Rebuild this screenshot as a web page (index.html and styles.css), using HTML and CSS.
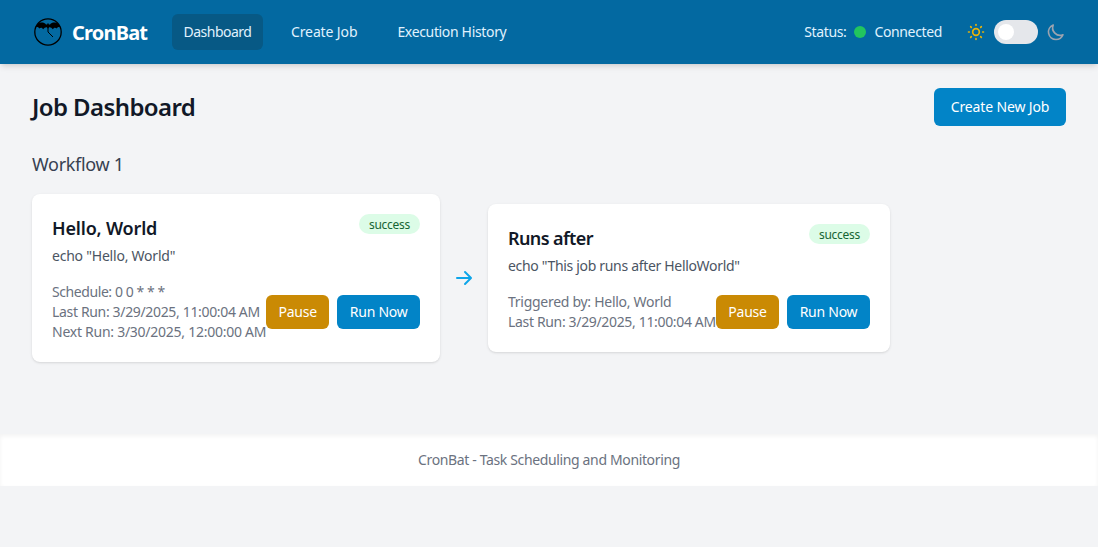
FILE: index.html
```html
<!DOCTYPE html>
<html lang="en">
<head>
<meta charset="utf-8">
<title>CronBat</title>
<link rel="stylesheet" href="styles.css">
</head>
<body>
<header class="topbar">
  <div class="brand">
    <svg class="logo" viewBox="0 0 32 32"><circle cx="16" cy="16" r="13.2" fill="none" stroke="#000" stroke-width="1.3"/><path d="M3.500 11.500L5.500 8C8 6 12 5.800 14 8.500L15.200 8.500 15.300 7.200 16 7.800 16.700 7.200 16.800 8.500 18 8.500C20 5.800 24 6 26.500 8L28.500 11.500C27 10.800 25.800 11 24.800 12.500 23.500 11.200 21.800 11.300 20.800 13.300 19.800 11.800 18.300 11 17.200 11.300L16 12.800 14.800 11.300C13.700 11 12.200 11.800 11.200 13.300 10.200 11.300 8.500 11.200 7.200 12.500 6.200 11 5 10.800 3.500 11.500z" fill="#000"/><path d="M16 10.500V16l5 5" fill="none" stroke="#000" stroke-width="1"/></svg>
    <span class="brand-name">CronBat</span>
  </div>
  <nav class="nav"><a class="nav-link active">Dashboard</a><a class="nav-link nav-create">Create Job</a><a class="nav-link">Execution History</a></nav>
  <div class="status"><span>Status:</span><i class="dot"></i><span>Connected</span></div>
  <div class="theme">
    <svg class="icon sun" viewBox="0 0 24 24"><path d="M12 3v1m0 16v1m9-9h-1M4 12H3m15.364 6.364l-.707-.707M6.343 6.343l-.707-.707m12.728 0l-.707.707M6.343 17.657l-.707.707M16 12a4 4 0 11-8 0 4 4 0 018 0z"/></svg>
    <span class="toggle"><i class="knob"></i></span>
    <svg class="icon moon" viewBox="0 0 24 24"><path d="M20.354 15.354A9 9 0 018.646 3.646 9.003 9.003 0 0012 21a9.003 9.003 0 008.354-5.646z"/></svg>
  </div>
</header>
<main class="main">
  <div class="heading"><h1 class="title">Job Dashboard</h1><button class="btn create">Create New Job</button></div>
  <h2 class="workflow">Workflow 1</h2>
  <div class="flow">
    <section class="card card-first">
      <div class="card-head"><h3 class="card-title">Hello, World</h3><span class="badge">success</span></div>
      <p class="command">echo "Hello, World"</p>
      <div class="card-foot"><div class="meta"><p class="schedule">Schedule: 0 0 * * *</p><p class="last-run">Last Run: 3/29/2025, 11:00:04 AM</p><p>Next Run: 3/30/2025, 12:00:00 AM</p></div><div class="actions"><button class="btn pause">Pause</button><button class="btn run">Run Now</button></div></div>
    </section>
    <svg class="arrow" viewBox="0 0 20 20"><path d="M10.293 3.293a1 1 0 011.414 0l6 6a1 1 0 010 1.414l-6 6a1 1 0 01-1.414-1.414L14.586 11H3a1 1 0 110-2h11.586l-4.293-4.293a1 1 0 010-1.414z"/></svg>
    <section class="card card-second">
      <div class="card-head"><h3 class="card-title title-tight">Runs after</h3><span class="badge">success</span></div>
      <p class="command command-long">echo "This job runs after HelloWorld"</p>
      <div class="card-foot"><div class="meta"><p class="trigger">Triggered by: Hello, World</p><p class="last-run">Last Run: 3/29/2025, 11:00:04 AM</p></div><div class="actions"><button class="btn pause">Pause</button><button class="btn run">Run Now</button></div></div>
    </section>
  </div>
</main>
<footer class="footer">CronBat - Task Scheduling and Monitoring</footer>
</body>
</html>
```
FILE: styles.css
```css
* { box-sizing: border-box; margin: 0; padding: 0; }
body { background: #f3f4f6; color: #111827; font: 14px/20px "Noto Sans", sans-serif; }
.topbar { height: 64px; padding: 0 32px; display: flex; align-items: center; background: #0369a1; color: #e0f2fe; box-shadow: 0 4px 6px -1px rgba(0,0,0,.1), 0 2px 4px -2px rgba(0,0,0,.1); }
.brand { display: flex; align-items: center; gap: 8px; width: 140px; }
.logo { width: 32px; height: 32px; flex: none; }
.brand-name { padding-top: 2px; font-size: 20px; line-height: 28px; font-weight: 700; letter-spacing: -.8px; color: #fff; }
.nav { display: flex; gap: 16px; letter-spacing: -.34px; }
.nav-link { padding: 8px 12px; border-radius: 6px; white-space: nowrap; }
.nav-create { letter-spacing: -.12px; }
.active { width: 91px; padding: 8px 11.5px; letter-spacing: -.5px; background: #075985; }
.status { margin-left: auto; display: flex; align-items: center; gap: 8px; letter-spacing: -.36px; }
.dot { width: 12px; height: 12px; border-radius: 50%; background: #22c55e; }
.theme { display: flex; align-items: center; gap: 8px; margin-left: 24px; }
.icon { width: 20px; height: 20px; fill: none; stroke-width: 2; stroke-linecap: round; stroke-linejoin: round; }
.sun { stroke: #eab308; }
.moon { stroke: #9ca3af; }
.toggle { width: 44px; height: 24px; padding: 4px; border-radius: 12px; background: #e5e7eb; }
.knob { display: block; width: 16px; height: 16px; border-radius: 50%; background: #fff; }
.main { padding: 24px 32px; height: 370px; }
.heading { display: flex; align-items: center; justify-content: space-between; }
.title { font-size: 24px; line-height: 32px; font-weight: 600; letter-spacing: -.6px; }
.btn { border: 0; border-radius: 6px; font: inherit; letter-spacing: -.25px; color: #fff; background: #0284c7; white-space: nowrap; }
.create { width: 132px; height: 38px; letter-spacing: -.15px; }
.workflow { margin-top: 24px; font-size: 18px; line-height: 28px; font-weight: 400; letter-spacing: -.3px; color: #374151; }
.flow { margin-top: 16px; display: flex; align-items: center; }
.card { padding: 20px; border-radius: 8px; background: #fff; box-shadow: 0 1px 3px rgba(0,0,0,.1), 0 1px 2px -1px rgba(0,0,0,.1); }
.card-first { width: 408px; }
.card-second { width: 402px; }
.card-head { display: flex; justify-content: space-between; align-items: flex-start; height: 32px; }
.card-title { font-size: 18px; line-height: 28px; font-weight: 600; letter-spacing: -.17px; }
.title-tight { letter-spacing: -.6px; }
.badge { width: 61px; padding: 3px 0 1px; text-align: center; border-radius: 10px; background: #dcfce7; color: #166534; font-size: 12px; line-height: 16px; letter-spacing: -.25px; }
.command { letter-spacing: -.22px; color: #4b5563; }
.command-long { letter-spacing: -.32px; }
.card-foot { margin-top: 16px; display: flex; justify-content: space-between; align-items: center; color: #6b7280; }
.meta { white-space: nowrap; letter-spacing: -.26px; }
.schedule { letter-spacing: -.42px; }
.trigger { letter-spacing: -.28px; }
.last-run { letter-spacing: -.34px; }
.actions { display: flex; gap: 8px; }
.pause, .run { height: 34px; }
.pause { width: 63px; background: #ca8a04; }
.run { width: 83px; }
.arrow { width: 20px; height: 20px; margin: 0 14px; flex: none; fill: #0ea5e9; }
.footer { height: 52px; display: flex; align-items: center; justify-content: center; background: #fff; color: #6b7280; letter-spacing: -.36px; box-shadow: inset 0 2px 4px rgba(0,0,0,.05); }
```
